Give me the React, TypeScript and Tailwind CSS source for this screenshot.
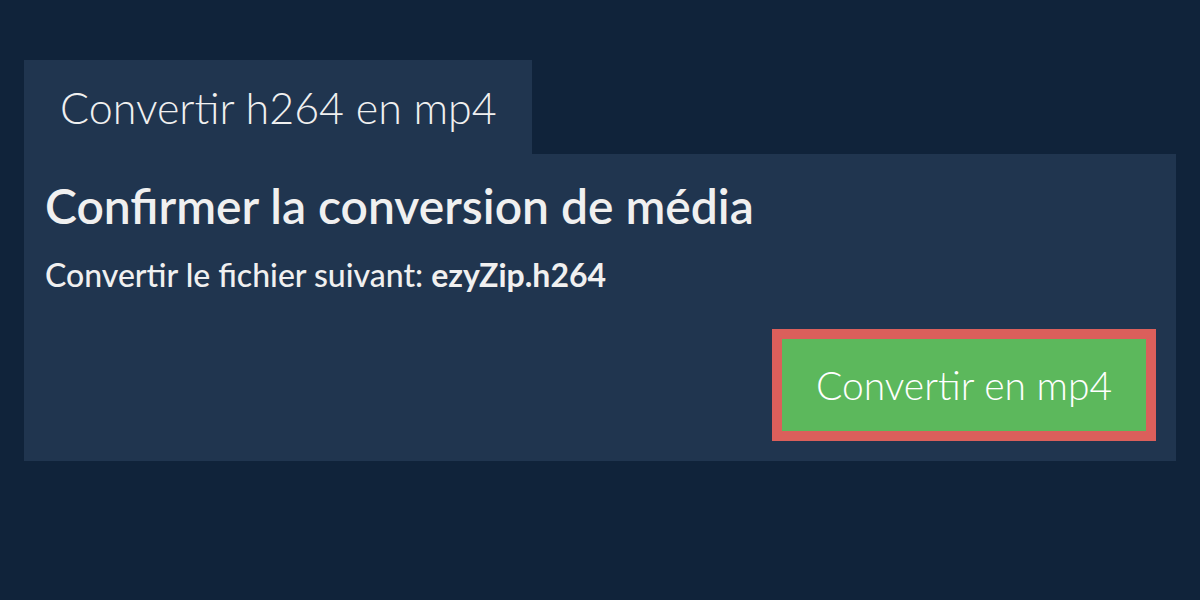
const App = () => {
  return (
    <div className="min-h-[600px] w-full bg-[#10233a] px-6 pt-[60px] text-[#f0f0f0] font-['Lato','Open_Sans',sans-serif]">
      <div className="flex">
        <div className="h-[94px] bg-[#20354f] pl-9 pr-[35px] flex items-center text-[43px] font-light leading-none">
          Convertir h264 en mp4
        </div>
      </div>
      <div className="bg-[#20354f] pl-[21px] pr-5 pt-[22px] pb-5 flex flex-col">
        <h1 className="text-[48px] font-semibold leading-[60px]">Confirmer la conversion de média</h1>
        <p className="text-[32px] font-medium mt-[19px] leading-[40px]">
          Convertir le fichier suivant: <span className="font-bold">ezyZip.h264</span>
        </p>
        <div className="flex justify-end mt-[34px]">
          <button className="h-[112px] w-[384px] border-[10px] border-[#db5f5b] bg-[#5cb85c] text-[39px] font-light text-white">
            Convertir en mp4
          </button>
        </div>
      </div>
    </div>
  );
};

export default App;
